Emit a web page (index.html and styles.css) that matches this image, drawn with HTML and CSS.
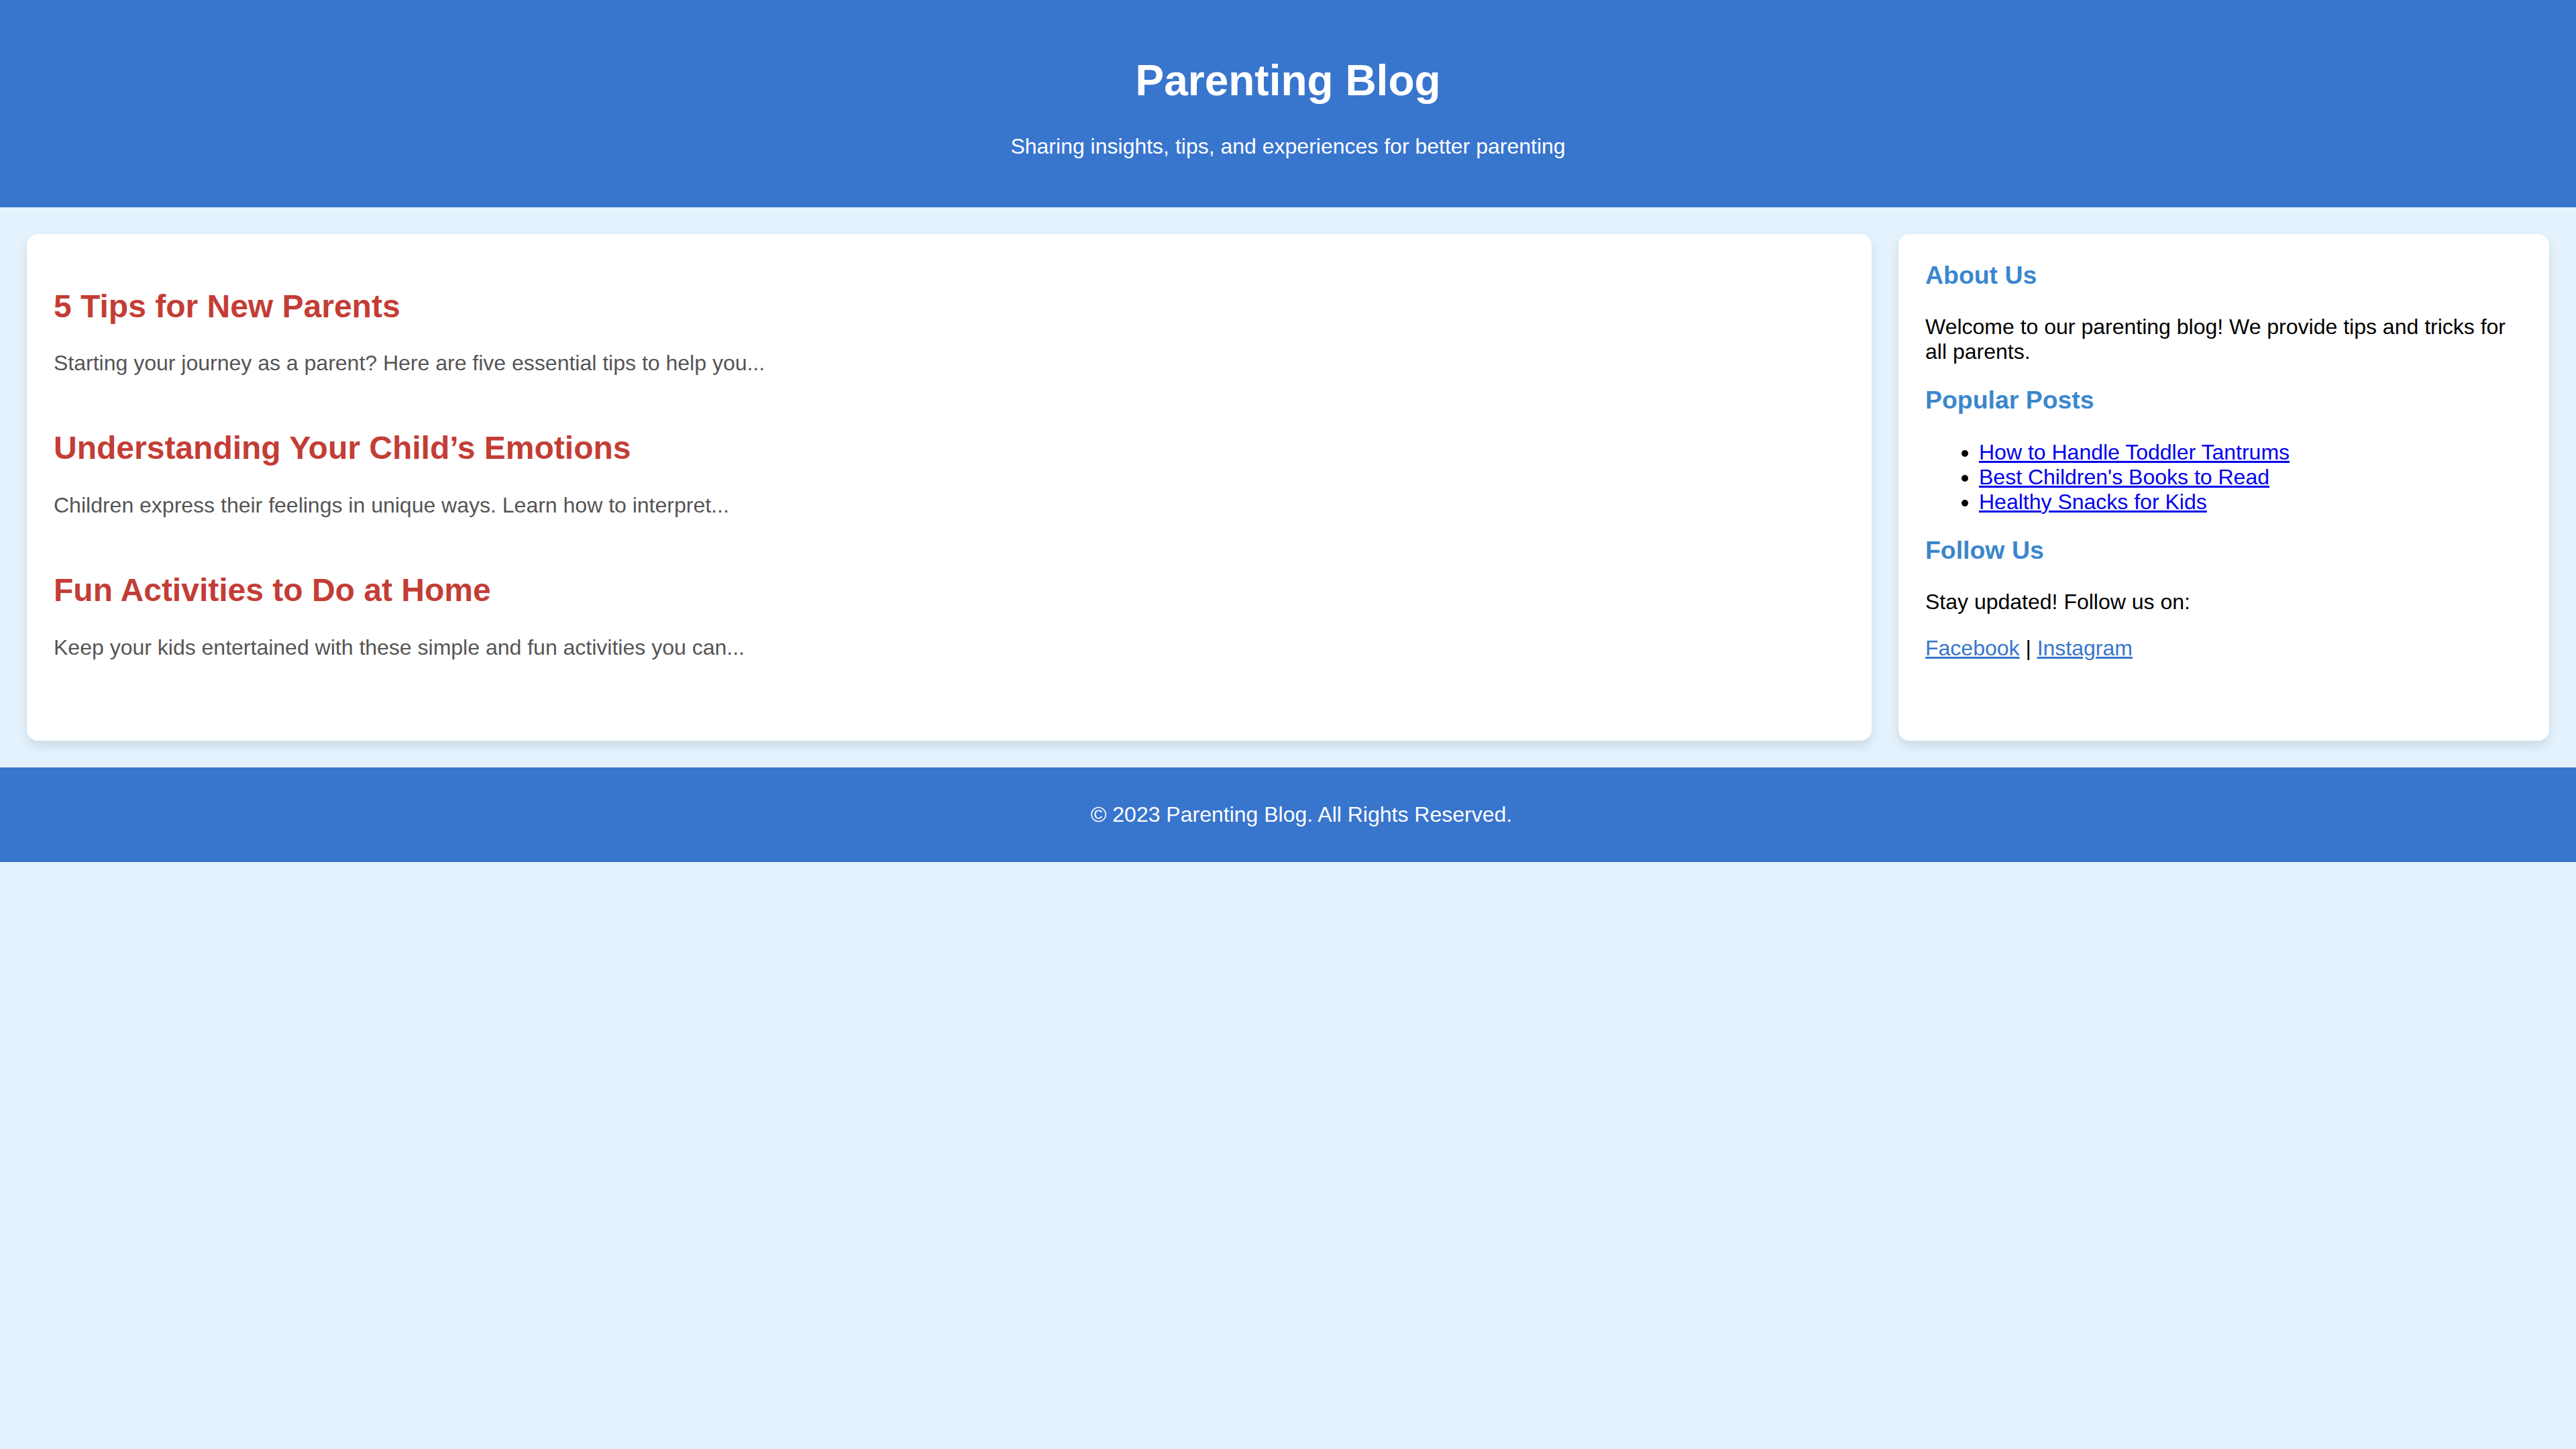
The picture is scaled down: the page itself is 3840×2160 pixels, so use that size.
FILE: index.html
```html
<!DOCTYPE html>
<html lang="en">
<head>
<meta charset="utf-8">
<title>Parenting Blog</title>
<link rel="stylesheet" href="styles.css">
</head>
<body>
<header class="site-header">
  <h1 class="site-title">Parenting Blog</h1>
  <p class="site-tagline">Sharing insights, tips, and experiences for better parenting</p>
</header>
<div class="container">
  <main class="content card">
    <article class="post">
      <h2 class="post-title">5 Tips for New Parents</h2>
      <p class="post-excerpt">Starting your journey as a parent? Here are five essential tips to help you...</p>
    </article>
    <article class="post">
      <h2 class="post-title">Understanding Your Child’s Emotions</h2>
      <p class="post-excerpt">Children express their feelings in unique ways. Learn how to interpret...</p>
    </article>
    <article class="post">
      <h2 class="post-title">Fun Activities to Do at Home</h2>
      <p class="post-excerpt">Keep your kids entertained with these simple and fun activities you can...</p>
    </article>
  </main>
  <aside class="sidebar card">
    <h3 class="side-title">About Us</h3>
    <p class="side-text">Welcome to our parenting blog! We provide tips and tricks for all parents.</p>
    <h3 class="side-title">Popular Posts</h3>
    <ul class="side-list">
      <li><a href="#">How to Handle Toddler Tantrums</a></li>
      <li><a href="#">Best Children's Books to Read</a></li>
      <li><a href="#">Healthy Snacks for Kids</a></li>
    </ul>
    <h3 class="side-title">Follow Us</h3>
    <p class="side-text">Stay updated! Follow us on:</p>
    <p class="side-text"><a class="social" href="#">Facebook</a> | <a class="social" href="#">Instagram</a></p>
  </aside>
</div>
<footer class="site-footer">
  <p class="footer-text">© 2023 Parenting Blog. All Rights Reserved.</p>
</footer>
</body>
</html>
```
FILE: styles.css
```css
html, body {
  margin: 0;
  padding: 0;
}
body {
  background: #e3f2fd;
  font-family: "Liberation Sans", Arial, Helvetica, sans-serif;
  font-size: 32px;
  color: #000;
}
.site-header {
  background: #3875cd;
  color: #fff;
  text-align: center;
  padding: 40px 0;
}
.site-title {
  font-size: 64px;
  font-weight: bold;
  margin: 42.88px 0;
}
.site-tagline {
  font-size: 32px;
  margin: 32px 0;
}
.container {
  display: flex;
  gap: 40px;
  padding: 40px;
}
.card {
  background: #fff;
  border-radius: 16px;
  box-shadow: 0 8px 16px rgba(0, 0, 0, 0.1);
  padding: 40px;
}
.content {
  flex: 3;
}
.sidebar {
  flex: 1;
}
.post {
  padding-bottom: 40px;
  margin-bottom: 40px;
}
.post-title {
  color: #c33d36;
  font-size: 48px;
  font-weight: bold;
  margin: 39.84px 0;
}
.post-excerpt {
  color: #555;
  font-size: 32px;
  margin: 0;
}
.side-title {
  color: #3a87cd;
  font-size: 37.44px;
  font-weight: bold;
  margin: 0 0 37.44px;
}
.side-text {
  margin: 32px 0;
}
.side-list {
  margin: 32px 0;
  padding-left: 80px;
}
.side-list a {
  color: #0000ee;
}
.social {
  color: #3875cd;
}
.site-footer {
  background: #3875cd;
  color: #fff;
  text-align: center;
  padding: 20px 0 20px 40px;
}
.footer-text {
  margin: 32px 0;
}
```
